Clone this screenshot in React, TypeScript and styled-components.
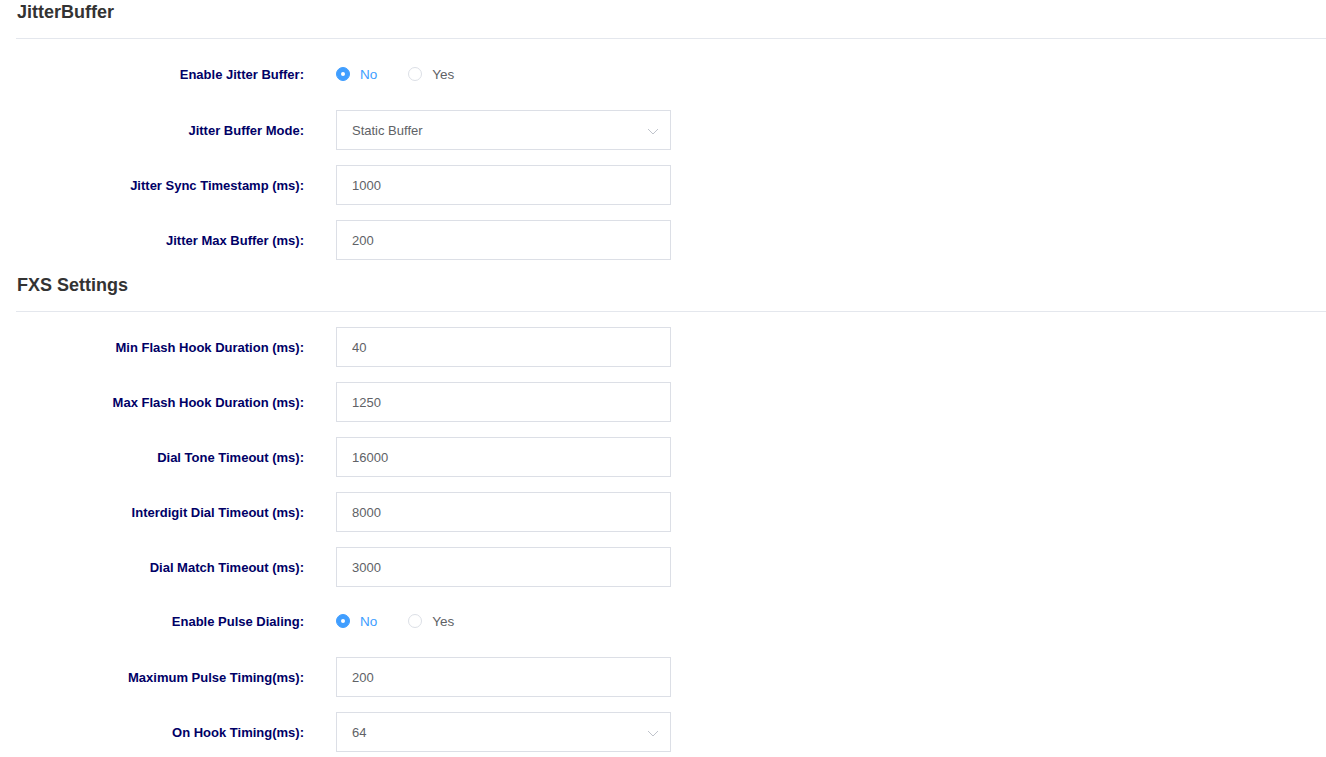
import React, {useState} from "react";
import styled, {createGlobalStyle} from "styled-components";

//#region Style Definitions
const GlobalStyle = createGlobalStyle`
    html, body {
        margin: 0;
        padding: 0;
        background: #ffffff;
        font-family: "Liberation Sans", Arial, sans-serif;
    }
`;

const Page = styled.div`
    padding-left: 16px;
    width: 1310px;
`;

const SectionHeader = styled.div`
    height: 39px;
    box-sizing: border-box;
    border-bottom: 1px solid #e4e7ed;
`;

const SectionTitle = styled.h3`
    margin: 0;
    padding-left: 1px;
    font-size: 18px;
    line-height: 24px;
    font-weight: bold;
    color: #333333;
`;

const Rows = styled.div<{ $top: number; $bottom: number }>`
    display: flex;
    flex-direction: column;
    gap: 15px;
    padding-top: ${p => p.$top}px;
    padding-bottom: ${p => p.$bottom}px;
`;

const FormRow = styled.div<{ $radio?: boolean }>`
    display: flex;
    align-items: center;
    height: 40px;
    margin: ${p => (p.$radio ? "-1px 0 1px" : "0")};
`;

const Label = styled.label`
    width: 288px;
    padding-right: 32px;
    text-align: right;
    font-size: 13px;
    font-weight: bold;
    color: #000066;
    white-space: nowrap;
`;

const Field = styled.div`
    position: relative;
    width: 335px;
    height: 40px;
    box-sizing: border-box;
    border: 1px solid #dcdfe6;
    display: flex;
    align-items: center;
    padding-left: 15px;
    font-size: 13px;
    color: #606266;
`;

const TextInput = styled.input`
    border: none;
    outline: none;
    padding: 0;
    width: 100%;
    font-family: "Liberation Sans", Arial, sans-serif;
    font-size: 13px;
    color: #606266;
    background: transparent;
`;

const Chevron = styled.svg`
    position: absolute;
    right: 11px;
    top: 50%;
    margin-top: -2px;
`;

const RadioGroup = styled.div`
    display: flex;
    align-items: center;
    gap: 31px;
`;

const RadioOption = styled.label<{ $checked: boolean }>`
    display: flex;
    align-items: center;
    gap: 10px;
    font-size: 13.5px;
    color: ${p => (p.$checked ? "#409eff" : "#606266")};
    cursor: pointer;
`;

const RadioDot = styled.span<{ $checked: boolean }>`
    width: 14px;
    height: 14px;
    box-sizing: border-box;
    border-radius: 50%;
    border: 1px solid ${p => (p.$checked ? "#409eff" : "#dcdfe6")};
    background: ${p => (p.$checked ? "#409eff" : "#ffffff")};
    display: flex;
    align-items: center;
    justify-content: center;
    &::after {
        content: "";
        width: 4px;
        height: 4px;
        border-radius: 50%;
        background: #ffffff;
        display: ${p => (p.$checked ? "block" : "none")};
    }
`;
//#endregion

type Item =
    | { kind: "radio"; label: string }
    | { kind: "select"; label: string; value: string }
    | { kind: "input"; label: string; value: string };

const jitterItems: Item[] = [
    {kind: "radio", label: "Enable Jitter Buffer:"},
    {kind: "select", label: "Jitter Buffer Mode:", value: "Static Buffer"},
    {kind: "input", label: "Jitter Sync Timestamp (ms):", value: "1000"},
    {kind: "input", label: "Jitter Max Buffer (ms):", value: "200"},
];

const fxsItems: Item[] = [
    {kind: "input", label: "Min Flash Hook Duration (ms):", value: "40"},
    {kind: "input", label: "Max Flash Hook Duration (ms):", value: "1250"},
    {kind: "input", label: "Dial Tone Timeout (ms):", value: "16000"},
    {kind: "input", label: "Interdigit Dial Timeout (ms):", value: "8000"},
    {kind: "input", label: "Dial Match Timeout (ms):", value: "3000"},
    {kind: "radio", label: "Enable Pulse Dialing:"},
    {kind: "input", label: "Maximum Pulse Timing(ms):", value: "200"},
    {kind: "select", label: "On Hook Timing(ms):", value: "64"},
];

function YesNo() {
    const [value, setValue] = useState(false);
    return (
        <RadioGroup>
            <RadioOption $checked={!value} onClick={() => setValue(false)}>
                <RadioDot $checked={!value}/>No
            </RadioOption>
            <RadioOption $checked={value} onClick={() => setValue(true)}>
                <RadioDot $checked={value}/>Yes
            </RadioOption>
        </RadioGroup>
    );
}

function ItemRow({item}: { item: Item }) {
    if (item.kind === "radio") {
        return (
            <FormRow $radio>
                <Label>{item.label}</Label>
                <YesNo/>
            </FormRow>
        );
    }
    return (
        <FormRow>
            <Label>{item.label}</Label>
            <Field>
                {item.kind === "input"
                    ? <TextInput defaultValue={item.value}/>
                    : <>
                        <span>{item.value}</span>
                        <Chevron width="12" height="7" viewBox="0 0 12 7">
                            <path d="M1 1l5 5 5-5" fill="none" stroke="#c0c4cc" strokeWidth="1"/>
                        </Chevron>
                    </>}
            </Field>
        </FormRow>
    );
}

function Section(props: { title: string; items: Item[]; top: number; bottom: number }) {
    return (
        <section>
            <SectionHeader>
                <SectionTitle>{props.title}</SectionTitle>
            </SectionHeader>
            <Rows $top={props.top} $bottom={props.bottom}>
                {props.items.map((item, i) => <ItemRow key={i} item={item}/>)}
            </Rows>
        </section>
    );
}

export default function App() {
    return (
        <Page>
            <GlobalStyle/>
            <Section title="JitterBuffer" items={jitterItems} top={16} bottom={13}/>
            <Section title="FXS Settings" items={fxsItems} top={15} bottom={0}/>
        </Page>
    );
}
